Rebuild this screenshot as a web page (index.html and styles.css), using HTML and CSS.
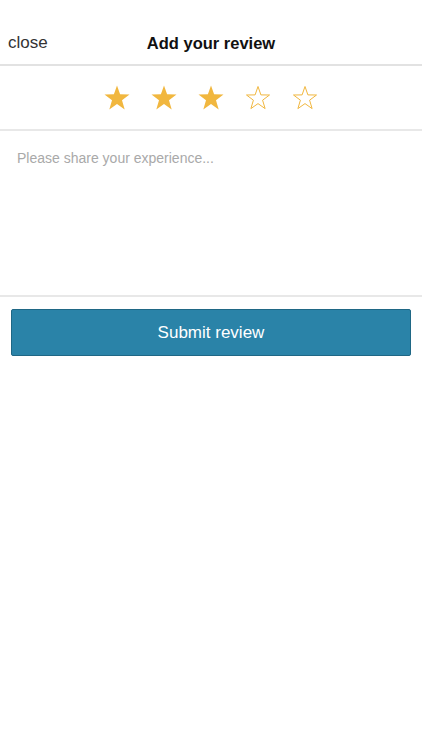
FILE: index.html
```html
<!DOCTYPE html>
<html>
<head>
<meta charset="utf-8">
<link rel="stylesheet" href="styles.css">
</head>
<body>
<div class="header">
  <span class="close">close</span>
  <span class="title">Add your review</span>
  <span></span>
</div>
<div class="stars">
  <svg class="star" viewBox="0 0 26 25"><polygon class="full" points="13,0.5 16.1,9.3 25.5,9.5 18,15.2 20.7,24.5 13,19 5.3,24.5 8,15.2 0.5,9.5 9.9,9.3"/></svg>
  <svg class="star" viewBox="0 0 26 25"><polygon class="full" points="13,0.5 16.1,9.3 25.5,9.5 18,15.2 20.7,24.5 13,19 5.3,24.5 8,15.2 0.5,9.5 9.9,9.3"/></svg>
  <svg class="star" viewBox="0 0 26 25"><polygon class="full" points="13,0.5 16.1,9.3 25.5,9.5 18,15.2 20.7,24.5 13,19 5.3,24.5 8,15.2 0.5,9.5 9.9,9.3"/></svg>
  <svg class="star" viewBox="0 0 26 25"><polygon class="empty" points="13,1.5 15.9,9.9 24.5,10 17.6,15.2 20.1,23.6 13,18.6 5.9,23.6 8.4,15.2 1.5,10 10.1,9.9"/></svg>
  <svg class="star" viewBox="0 0 26 25"><polygon class="empty" points="13,1.5 15.9,9.9 24.5,10 17.6,15.2 20.1,23.6 13,18.6 5.9,23.6 8.4,15.2 1.5,10 10.1,9.9"/></svg>
</div>
<div class="entry">
  <div class="placeholder">Please share your experience...</div>
</div>
<div class="actions">
  <button class="submit">Submit review</button>
</div>
</body>
</html>
```
FILE: styles.css
```css
html, body {
  margin: 0;
  padding: 0;
  background: #ffffff;
  font-family: "Liberation Sans", Arial, sans-serif;
}
.header {
  padding-top: 22px;
  height: 42px;
  display: grid;
  grid-template-columns: 1fr auto 1fr;
  align-items: center;
  border-bottom: 2px solid #e2e2e2;
}
.close {
  padding-left: 8px;
  font-size: 17px;
  color: #333333;
}
.title {
  font-size: 16.5px;
  font-weight: bold;
  color: #111111;
}
.stars {
  height: 63px;
  display: flex;
  justify-content: center;
  align-items: center;
  gap: 21px;
  border-bottom: 2px solid #e8e8e8;
}
.star {
  width: 26px;
  height: 25px;
  display: block;
}
.full {
  fill: #f1b73f;
}
.empty {
  fill: none;
  stroke: #f1b73f;
  stroke-width: 1;
}
.entry {
  height: 166px;
  border-bottom: 2px solid #e8e8e8;
  padding: 19px 17px 0;
  box-sizing: border-box;
}
.placeholder {
  font-size: 14px;
  line-height: 16px;
  color: #a9a9a9;
}
.actions {
  padding: 12px 11px;
}
.submit {
  display: block;
  width: 100%;
  height: 47px;
  background: #2a83a8;
  border: 1px solid #1f6785;
  border-radius: 2px;
  color: #ffffff;
  font-family: "Liberation Sans", Arial, sans-serif;
  font-size: 17px;
  padding-top: 2px;
}
```
